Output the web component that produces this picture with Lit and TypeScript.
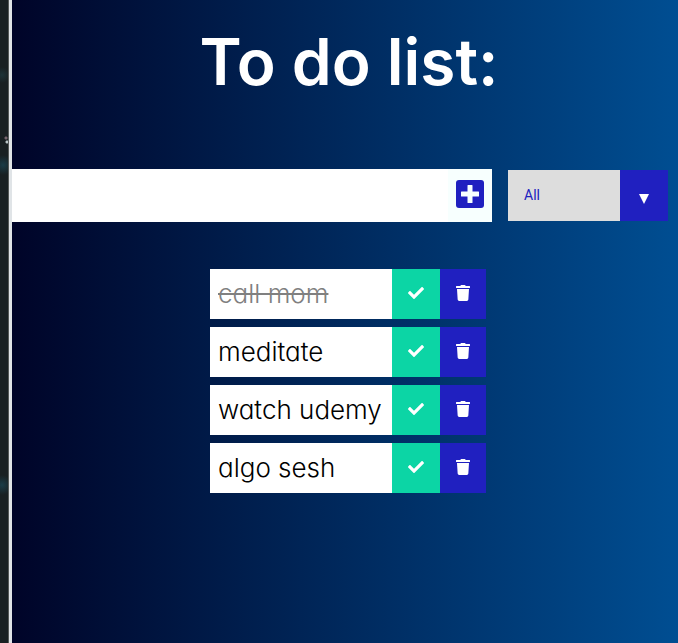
import { LitElement, html, css } from "lit";
import { customElement, state } from "lit/decorators.js";
import { classMap } from "lit/directives/class-map.js";

interface Todo {
  text: string;
  completed: boolean;
}

@customElement("app-root")
export class AppRoot extends LitElement {
  static styles = css`
    :host {
      display: flex;
      min-height: 100vh;
      font-family: Inter, "Noto Sans", sans-serif;
      font-feature-settings: "cv11";
    }
    * {
      box-sizing: border-box;
    }
    button,
    input,
    select {
      font: inherit;
      border: 0;
      border-radius: 0;
      margin: 0;
    }
    button {
      display: flex;
      align-items: center;
      justify-content: center;
      padding: 0 0 2px;
      color: #fff;
      cursor: pointer;
    }
    svg {
      display: block;
      fill: currentColor;
    }
    .backdrop {
      flex: none;
      width: 9px;
      border-right: 1px solid #555957;
      background:
        radial-gradient(circle at 7px 142px, #b9c4c6 0 1px, transparent 2px),
        radial-gradient(circle at 6px 138px, #78666f 0 1px, transparent 2px),
        radial-gradient(circle at 2px 75px, #1d3338, transparent 8px),
        radial-gradient(circle at 3px 165px, #1a3c47, transparent 10px),
        radial-gradient(circle at 2px 485px, #1b3d48, transparent 10px),
        #192022;
    }
    .frame {
      flex: none;
      width: 3px;
      background: #e0e4e7;
    }
    .page {
      flex: 1;
      min-width: 0;
      background: linear-gradient(to right, #000428, #004e92);
    }
    h1 {
      margin: 0;
      padding: 14px 0 0 8px;
      font-size: 64px;
      line-height: 96px;
      font-weight: 600;
      text-align: center;
      color: #fff;
    }
    form {
      display: flex;
      align-items: center;
      gap: 16px;
      margin-top: 59px;
      padding-right: 10px;
    }
    .entry {
      display: flex;
      flex: 1;
      min-width: 0;
      height: 53px;
      background: #fff;
    }
    .entry input {
      flex: 1;
      min-width: 0;
      padding: 8px;
      font-size: 24px;
      background: #fff;
      outline: none;
    }
    .add {
      width: 44px;
      padding-bottom: 4px;
      background: #f7fffe;
      color: #2020c0;
    }
    .filter {
      position: relative;
      width: 160px;
      height: 51px;
    }
    .filter select {
      appearance: none;
      width: 100%;
      height: 100%;
      padding: 0 64px 2px 16px;
      font-family: Roboto, sans-serif;
      font-size: 14px;
      color: #2020c0;
      background: #ddd;
      outline: none;
    }
    .arrow {
      position: absolute;
      top: 0;
      right: 0;
      width: 48px;
      height: 100%;
      display: flex;
      align-items: center;
      justify-content: center;
      padding-top: 6px;
      color: #fff;
      background: #2020c0;
      pointer-events: none;
    }
    ul {
      display: grid;
      gap: 8px;
      width: max-content;
      margin: 0 auto;
      padding: 47px 0 0 6px;
      list-style: none;
    }
    li {
      display: flex;
      height: 50px;
      background: #fff;
    }
    .text {
      flex: 1;
      min-width: 182px;
      padding: 0 8px;
      font-size: 26px;
      font-weight: 300;
      line-height: 50px;
      color: #000;
    }
    .completed .text {
      color: #808080;
      text-decoration: line-through;
    }
    .check {
      width: 48px;
      background: #0cd5a5;
    }
    .trash {
      width: 46px;
      background: #2020c0;
    }
  `;

  @state() private todos: Todo[] = [
    { text: "call mom", completed: true },
    { text: "meditate", completed: false },
    { text: "watch udemy", completed: false },
    { text: "algo sesh", completed: false },
  ];

  @state() private filter = "all";

  private add(e: Event) {
    e.preventDefault();
    const input = this.renderRoot.querySelector("input") as HTMLInputElement;
    const text = input.value.trim();
    if (text) this.todos = [...this.todos, { text, completed: false }];
    input.value = "";
  }

  private toggle(todo: Todo) {
    this.todos = this.todos.map((t) =>
      t === todo ? { ...t, completed: !t.completed } : t
    );
  }

  private remove(todo: Todo) {
    this.todos = this.todos.filter((t) => t !== todo);
  }

  private get visible() {
    return this.todos.filter(
      (t) => this.filter === "all" || t.completed === (this.filter === "completed")
    );
  }

  render() {
    return html`
      <div class="backdrop"></div>
      <div class="frame"></div>
      <main class="page">
        <h1>To do list:</h1>
        <form @submit=${this.add}>
          <div class="entry">
            <input type="text" aria-label="New task" />
            <button class="add" type="submit" aria-label="Add task">
              <svg width="28" height="28" viewBox="0 0 28 28">
                <rect width="28" height="28" rx="3" />
                <path fill="#f7fffe" d="M12 5h4q.5 0 .5.5v6h6q.5 0 .5.5v4q0 .5-.5.5h-6v6q0 .5-.5.5h-4q-.5 0-.5-.5v-6h-6q-.5 0-.5-.5v-4q0-.5.5-.5h6v-6q0-.5.5-.5z" />
              </svg>
            </button>
          </div>
          <div class="filter">
            <select
              aria-label="Filter tasks"
              @change=${(e: Event) => (this.filter = (e.target as HTMLSelectElement).value)}
            >
              <option value="all">All</option>
              <option value="completed">Completed</option>
              <option value="uncompleted">Uncompleted</option>
            </select>
            <span class="arrow">
              <svg width="10" height="10" viewBox="0 0 10 10"><path d="M0 0h10L5 10z" /></svg>
            </span>
          </div>
        </form>
        <ul>
          ${this.visible.map(
            (todo) => html`
              <li class=${classMap({ completed: todo.completed })}>
                <span class="text">${todo.text}</span>
                <button class="check" aria-label="Complete ${todo.text}" @click=${() => this.toggle(todo)}>
                  <svg width="16" height="16" viewBox="0 0 512 512">
                    <path d="M173.898 439.404l-166.400-166.400c-9.997-9.997-9.997-26.206 0-36.204l36.203-36.204c9.997-9.998 26.207-9.998 36.204 0L192 312.690 432.095 72.596c9.997-9.997 26.207-9.997 36.204 0l36.203 36.204c9.997 9.997 9.997 26.206 0 36.204l-294.400 294.401c-9.998 9.997-26.207 9.997-36.204-.001z" />
                  </svg>
                </button>
                <button class="trash" aria-label="Delete ${todo.text}" @click=${() => this.remove(todo)}>
                  <svg width="14" height="16" viewBox="0 0 448 512">
                    <path d="M432 32H312l-9.400-18.700A24 24 0 0 0 281.100 0H166.800a23.720 23.720 0 0 0-21.400 13.300L136 32H16A16 16 0 0 0 0 48v32a16 16 0 0 0 16 16h416a16 16 0 0 0 16-16V48a16 16 0 0 0-16-16zM53.200 467a48 48 0 0 0 47.900 45h245.800a48 48 0 0 0 47.900-45L416 128H32z" />
                  </svg>
                </button>
              </li>
            `
          )}
        </ul>
      </main>
    `;
  }
}
